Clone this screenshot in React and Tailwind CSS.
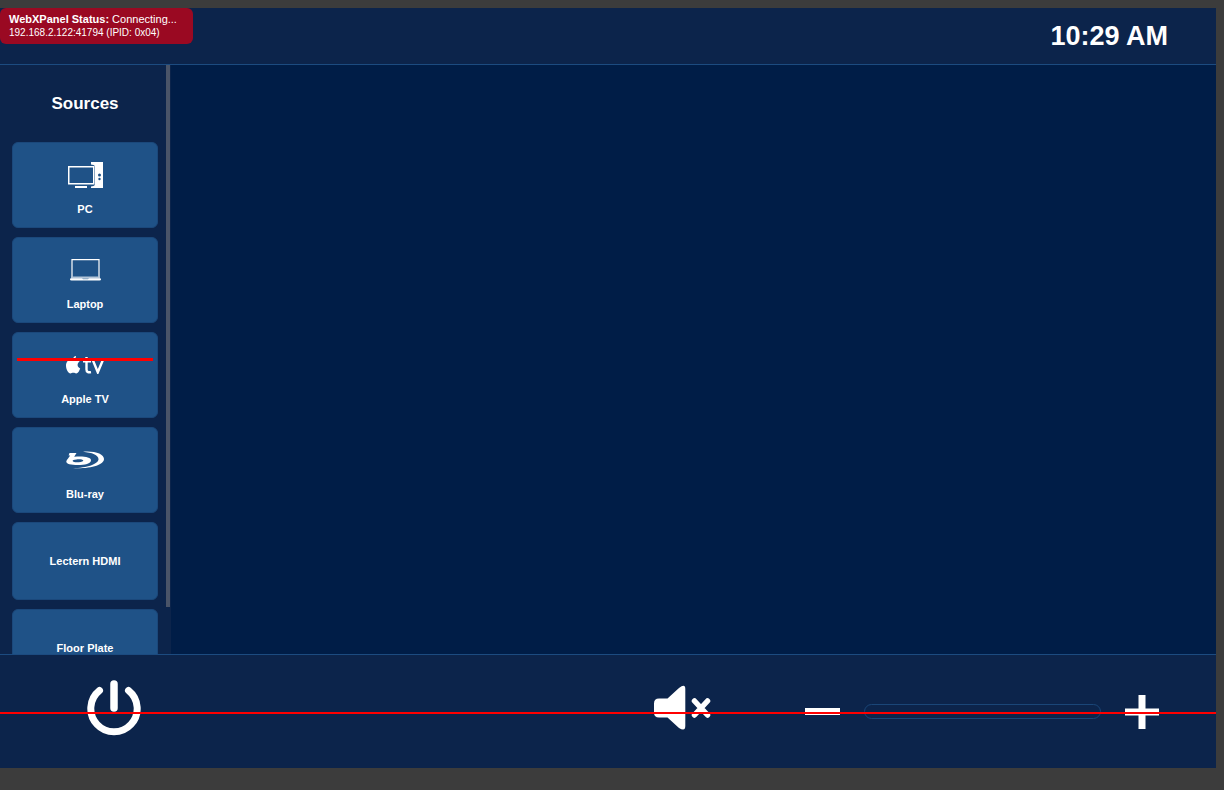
function PcIcon() {
  return (
    <svg width="35" height="26" viewBox="0 0 35 26" fill="none" aria-hidden="true">
      <rect x="0.75" y="4.75" width="25" height="17" stroke="#fff" strokeWidth="1.5" />
      <rect x="7" y="24" width="12" height="2" fill="#fff" />
      <path d="M23 0h12v26H23v-1.600l2.500-.4q1.500-.5 1.500-2V5q0-1.500-1.500-2L23 2.500z" fill="#fff" />
      <circle cx="31.500" cy="13" r="1.500" fill="#1f5287" />
      <circle cx="31.500" cy="17" r="1.200" fill="#1f5287" />
    </svg>
  );
}

function LaptopIcon() {
  return (
    <svg width="31" height="22" viewBox="0 0 31 22" fill="none" aria-hidden="true">
      <path d="M2 18V.6h27V18" stroke="#fff" strokeWidth="1.200" />
      <rect x="1" y="17.500" width="29" height="2.500" fill="#b4c5d8" />
      <path d="M0 19.600h31v.8q0 1-1.500 1h-28q-1.500 0-1.500-1z" fill="#fff" />
      <path d="M12 19.300h7l-1 1h-5z" fill="#7f9fbd" />
    </svg>
  );
}

function AppleTvIcon() {
  return (
    <svg width="38" height="18" viewBox="0 0 38 18" fill="none" aria-hidden="true">
      <path
        d="M7.200 4.400C8 4.400 8.800 3.700 10.200 3.700c1.500 0 2.700.7 3.400 1.800-2.900 1.700-2.500 5.700.6 6.900-.9 2.500-2.300 5-4 5-1.100 0-1.500-.7-2.900-.7s-1.900.7-2.900.7C2.400 17.400 0 13.200 0 9.700c0-3.700 2.300-5.900 4.600-5.900 1.200 0 1.900.6 2.600.6zM7.100 3.300C7 1.500 8.500.2 10 0c.2 1.800-1.300 3.300-2.900 3.300z"
        fill="#fff"
      />
      <path d="M20.500 1v12.500q0 3.500 4.500 2.600M17 5.200h8" stroke="#fff" strokeWidth="2.400" />
      <path d="M27 4.500l4.800 11.800L36.700 4.500" stroke="#fff" strokeWidth="2.400" />
    </svg>
  );
}

function BlurayIcon() {
  return (
    <svg width="38" height="18" viewBox="0 0 38 18" fill="#fff" aria-hidden="true">
      <path d="M17 .7C29-.3 38 3 38 8c0 5.800-13 10-31 9.200C21 17 32.500 13 32.500 8.300 32.500 4 26 1.500 17 .7z" />
      <path
        fillRule="evenodd"
        d="M3.500 2h7L8.200 5.800c9-.8 16.800.2 16.800 3.500 0 3.500-6.300 4.700-13 4.700C5 14 0 13 .3 10.500.5 9.300 1.400 8.300 2.400 7l1.800-2.600H2.600zM10.500 8.400c-2.700.2-4 .8-3.900 1.600.2 1.200 3.700 1.500 6.300 1.200 2.700-.2 4.600-.7 4.400-1.600-.3-1.100-3.600-1.500-6.800-1.200z"
      />
    </svg>
  );
}

const sources = [
  { name: "PC", icon: <PcIcon /> },
  { name: "Laptop", icon: <LaptopIcon /> },
  { name: "Apple TV", icon: <AppleTvIcon />, struck: true },
  { name: "Blu-ray", icon: <BlurayIcon /> },
  { name: "Lectern HDMI" },
  { name: "Floor Plate" },
];

function SourceButton({ name, icon, struck }) {
  return (
    <button
      type="button"
      className={
        "relative flex w-full shrink-0 flex-col items-center rounded-md border border-[#1b487b] bg-[#1f5287] text-[11px] leading-4 font-bold " +
        (icon ? "h-[86px] pt-[14px]" : "h-[78px] justify-center")
      }
    >
      {icon && <span className="mb-2 flex h-9 items-center justify-center">{icon}</span>}
      {name}
      {struck && <span className="absolute inset-x-1 top-[25px] h-[3px] bg-[#ff0000]" />}
    </button>
  );
}

export default function App() {
  return (
    <div className="h-screen bg-[#3c3c3c] pt-2 pr-2 pb-[22px] font-['Liberation_Sans',Arial,sans-serif] text-white">
      <div className="relative flex h-full flex-col bg-[#0c244b]">
        <div
          role="status"
          className="absolute top-0 left-0 rounded-md bg-[#9a0922] py-1 pr-4 pl-[9px] whitespace-nowrap"
        >
          <p className="text-[11px] leading-[14px]">
            <strong>WebXPanel Status:</strong> Connecting...
          </p>
          <p className="text-[10px] leading-[14px]">192.168.2.122:41794 (IPID: 0x04)</p>
        </div>

        <header className="flex h-[57px] shrink-0 items-center justify-end border-b border-[#1c4b80] pr-12">
          <time className="text-[27px] leading-8 font-bold">10:29 AM</time>
        </header>

        <div className="flex min-h-0 flex-1">
          <aside className="flex w-[171px] shrink-0">
            <div className="flex min-w-0 flex-1 flex-col overflow-hidden pr-2 pl-3">
              <h2 className="shrink-0 pt-[29px] pb-7 text-center text-[17px] leading-5 font-bold">Sources</h2>
              <nav aria-label="Sources" className="flex flex-col gap-[9px]">
                {sources.map((source) => (
                  <SourceButton key={source.name} {...source} />
                ))}
              </nav>
            </div>
            <div className="mr-px h-[92%] w-1 bg-[#4a5468]" />
          </aside>
          <main className="flex-1 bg-[#001d47]" />
        </div>

        <footer className="relative flex h-[114px] shrink-0 items-center border-t border-[#1c4b80] pr-[57px] pl-[87px]">
          <button type="button" aria-label="Power" className="pb-2">
            <svg width="54" height="56" viewBox="0 0 54 56" fill="none" stroke="#fff" strokeLinecap="round">
              <path d="M12.500 10.500A23.200 23.200 0 1 0 41.500 10.500" strokeWidth="7" />
              <path d="M27 4v24" strokeWidth="7.500" />
            </svg>
          </button>

          <div className="ml-auto flex items-center gap-6">
            <button type="button" aria-label="Mute" className="mr-[70px] pb-2">
              <svg width="57" height="46" viewBox="0 0 57 46" fill="#fff">
                <path d="M5 13.500h8.500L25 3Q31.300-2 31.300 4v37q0 6-6.300 2L13.500 32.500H5q-5 0-5-5v-9q0-5 5-5z" />
                <path d="M40.500 16l13 14M53.500 16L40.500 30" stroke="#fff" strokeWidth="5.500" strokeLinecap="round" />
              </svg>
            </button>
            <button type="button" aria-label="Volume down" className="flex h-[34px] items-center">
              <span className="h-[7px] w-[35px] bg-white" />
            </button>
            <input
              type="range"
              aria-label="Volume"
              min="0"
              max="100"
              defaultValue="0"
              className="h-[15px] w-[237px] appearance-none rounded-full border border-[#1a4678] bg-transparent [&::-webkit-slider-thumb]:w-0 [&::-webkit-slider-thumb]:appearance-none"
            />
            <button type="button" aria-label="Volume up">
              <svg width="34" height="34" viewBox="0 0 34 34" fill="#fff">
                <path d="M13.500 0h7v13.500H34v7H20.500V34h-7V20.500H0v-7h13.500z" />
              </svg>
            </button>
          </div>

          <span className="pointer-events-none absolute inset-x-0 top-1/2 h-[2px] bg-[#ff0000]" />
        </footer>
      </div>
    </div>
  );
}
